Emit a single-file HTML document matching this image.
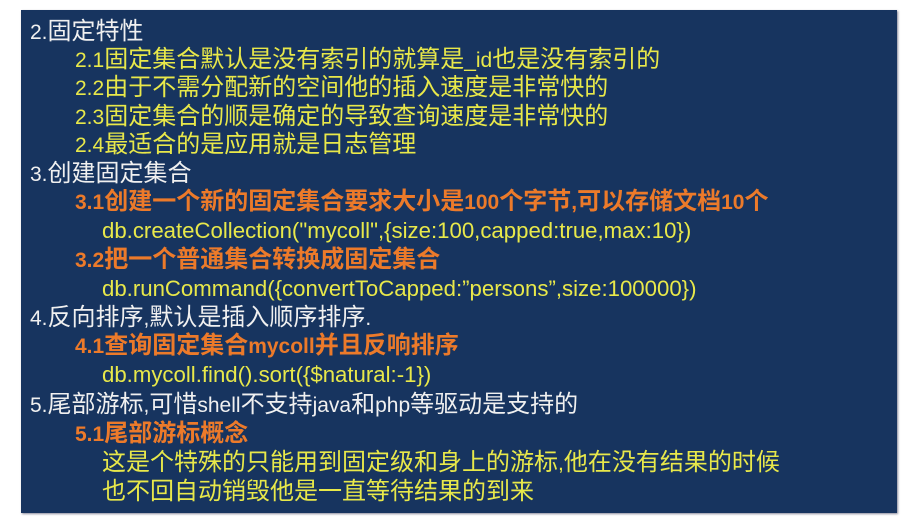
<!DOCTYPE html>
<html><head><meta charset="utf-8"><style>
body{margin:0;width:917px;height:526px;background:#fff;overflow:hidden}
#b{position:absolute;left:21px;top:10px;width:876px;height:503px;background:#17345f;box-shadow:1px 1px 2px #889}
.l{position:absolute;white-space:nowrap;font-family:"Liberation Sans","Noto Sans CJK SC",sans-serif;font-size:24px;line-height:28px;height:28px}
.l span{font-size:21px}
.l span.c{font-size:22.2px}
.w{color:#f0f0f0}.y{color:#e8e84a}.o{color:#ec7a2a;font-weight:bold}
</style></head><body><div id="b"></div>
<div class="l w" style="left:30px;top:18px"><span>2.</span>固定特性</div>
<div class="l y" style="left:75px;top:46px"><span>2.1</span>固定集合默认是没有索引的就算是<span>_id</span>也是没有索引的</div>
<div class="l y" style="left:75px;top:74px"><span>2.2</span>由于不需分配新的空间他的插入速度是非常快的</div>
<div class="l y" style="left:75px;top:103px"><span>2.3</span>固定集合的顺是确定的导致查询速度是非常快的</div>
<div class="l y" style="left:75px;top:131px"><span>2.4</span>最适合的是应用就是日志管理</div>
<div class="l w" style="left:30px;top:160px"><span>3.</span>创建固定集合</div>
<div class="l o" style="left:75px;top:188px"><span>3.1</span>创建一个新的固定集合要求大小是<span>100</span>个字节<span>,</span>可以存储文档<span>10</span>个</div>
<div class="l y" style="left:102px;top:217px"><span class="c">db.createCollection("mycoll",{size:100,capped:true,max:10})</span></div>
<div class="l o" style="left:75px;top:246px"><span>3.2</span>把一个普通集合转换成固定集合</div>
<div class="l y" style="left:102px;top:275px"><span class="c">db.runCommand({convertToCapped:”persons”,size:100000})</span></div>
<div class="l w" style="left:30px;top:304px"><span>4.</span>反向排序<span>,</span>默认是插入顺序排序<span>.</span></div>
<div class="l o" style="left:75px;top:332px"><span>4.1</span>查询固定集合<span>mycoll</span>并且反响排序</div>
<div class="l y" style="left:102px;top:361px"><span class="c">db.mycoll.find().sort({$natural:-1})</span></div>
<div class="l w" style="left:30px;top:391px"><span>5.</span>尾部游标<span>,</span>可惜<span>shell</span>不支持<span>java</span>和<span>php</span>等驱动是支持的</div>
<div class="l o" style="left:75px;top:420px"><span>5.1</span>尾部游标概念</div>
<div class="l y" style="left:102px;top:449px">这是个特殊的只能用到固定级和身上的游标<span>,</span>他在没有结果的时候</div>
<div class="l y" style="left:102px;top:478px">也不回自动销毁他是一直等待结果的到来</div>
</body></html>
